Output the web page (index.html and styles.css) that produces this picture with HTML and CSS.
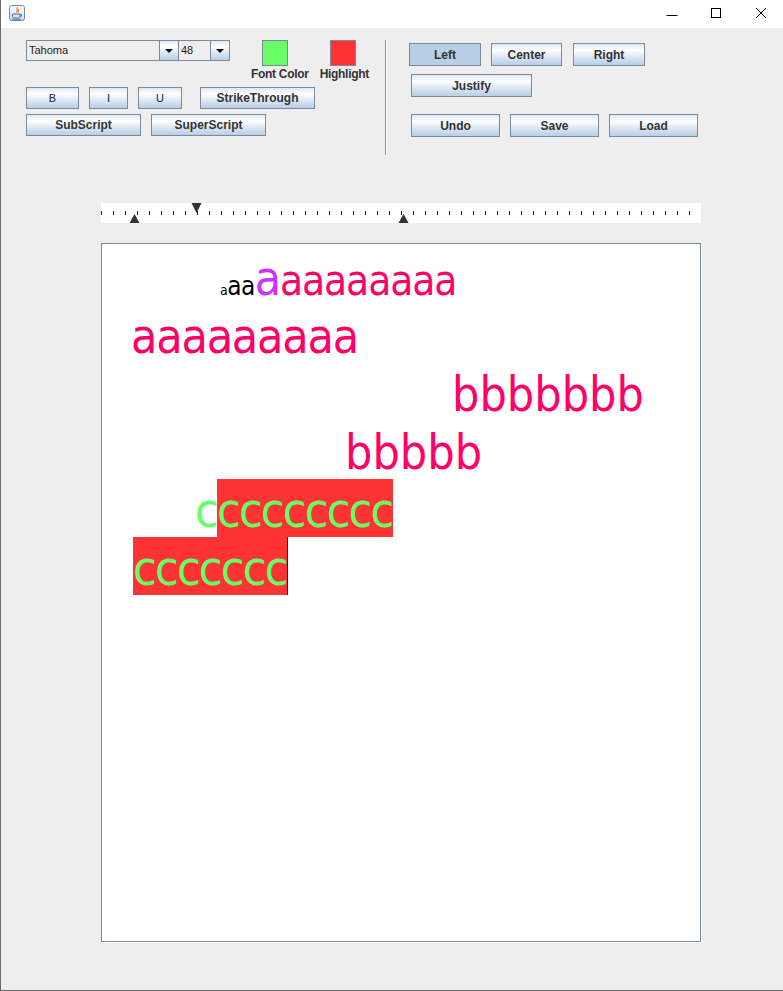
FILE: index.html
```html
<!DOCTYPE html>
<html>
<head>
<meta charset="utf-8">
<link rel="stylesheet" href="styles.css">
</head>
<body>
<div class="window">
  <div class="titlebar">
    <svg class="app-icon" width="16" height="16" viewBox="0 0 16 16">
      <defs>
        <linearGradient id="ig" x1="0" y1="0" x2="0" y2="1">
          <stop offset="0" stop-color="#ffffff"/>
          <stop offset="1" stop-color="#c9d9ea"/>
        </linearGradient>
      </defs>
      <rect x="0.5" y="0.5" width="15" height="15" rx="2" fill="url(#ig)" stroke="#6d8db5"/>
      <path d="M8.6 2.2 C6.6 3.8 9.6 5.2 7.4 7.6 M9.8 4.2 C8.8 5.2 10.2 6 9 7.4" fill="none" stroke="#e8762c" stroke-width="1.1"/>
      <path d="M3.5 9 H11 V11 C11 12.3 10 13 9 13 H5.5 C4.4 13 3.5 12.3 3.5 11 Z" fill="none" stroke="#4c72a8" stroke-width="1"/>
      <path d="M11 9.6 H12.4 V11.2 H11" fill="none" stroke="#4c72a8" stroke-width="1"/>
      <path d="M3 14.3 H12" stroke="#4c72a8" stroke-width="0.9"/>
    </svg>
    <div class="win-controls">
      <div class="wc wc-min"><svg width="12" height="12" viewBox="0 0 12 12"><path d="M0.5 6.5 H11.5" stroke="#000" stroke-width="1"/></svg></div>
      <div class="wc wc-max"><svg width="12" height="12" viewBox="0 0 12 12"><rect x="1.5" y="1.5" width="9" height="9" fill="none" stroke="#000" stroke-width="1"/></svg></div>
      <div class="wc wc-close"><svg width="12" height="12" viewBox="0 0 12 12"><path d="M1 1 L11 11 M11 1 L1 11" stroke="#000" stroke-width="1"/></svg></div>
    </div>
  </div>

  <div class="main">
    <div class="toolbar">
      <div class="left-group">
        <div class="row row1">
          <div class="combo font-combo">
            <div class="combo-field">Tahoma</div>
            <div class="combo-arrow"><span class="tri"></span></div>
          </div>
          <div class="combo size-combo">
            <div class="combo-field">48</div>
            <div class="combo-arrow"><span class="tri"></span></div>
          </div>
          <div class="color-col col-font">
            <div class="swatch swatch-green"></div>
            <div class="color-label">Font Color</div>
          </div>
          <div class="color-col col-hl">
            <div class="swatch swatch-red"></div>
            <div class="color-label">Highlight</div>
          </div>
        </div>
        <div class="row row2">
          <div class="btn plain w-b">B</div>
          <div class="btn plain w-i">I</div>
          <div class="btn plain w-u">U</div>
          <div class="btn w-strike">StrikeThrough</div>
        </div>
        <div class="row row3">
          <div class="btn w-script">SubScript</div>
          <div class="btn w-script">SuperScript</div>
        </div>
      </div>
      <div class="separator"></div>
      <div class="right-group">
        <div class="rrow rrow1">
          <div class="btn tall selected w-left">Left</div>
          <div class="btn tall w-center">Center</div>
          <div class="btn tall w-right">Right</div>
        </div>
        <div class="rrow rrow2">
          <div class="btn tall w-justify">Justify</div>
        </div>
        <div class="rrow rrow3">
          <div class="btn tall w-action">Undo</div>
          <div class="btn tall w-action">Save</div>
          <div class="btn tall w-action">Load</div>
        </div>
      </div>
    </div>

    <div class="ruler">
      <svg width="600" height="20" viewBox="0 0 600 20">
        <defs>
          <pattern id="ticks" x="0" y="0" width="12" height="20" patternUnits="userSpaceOnUse">
            <rect x="0" y="8" width="1" height="4" fill="#222"/>
          </pattern>
        </defs>
        <rect x="0" y="0" width="600" height="20" fill="#ffffff"/>
        <rect x="0" y="0" width="590" height="20" fill="url(#ticks)"/>
        <path d="M90.5 0 H100.5 L95.5 10 Z" fill="#333"/>
        <path d="M28.5 20 H38.5 L33.5 11 Z" fill="#333"/>
        <path d="M297.5 20 H307.5 L302.5 11 Z" fill="#333"/>
      </svg>
    </div>

    <div class="page">
      <div class="doc">
        <div class="line l1"><span class="t14">a</span><span class="t26">aa</span><span class="purple a48">a</span><span class="pink a42">aaaaaaaa</span></div>
        <div class="line l2"><span class="pink a48">aaaaaaaaa</span></div>
        <div class="line l3"><span class="pink">bbbbbbb</span></div>
        <div class="line l4"><span class="pink">bbbbb</span></div>
        <div class="line l5"><span class="green cc">c</span><span class="hl green cc">cccccccc</span></div>
        <div class="line l6"><span class="hl green cc">ccccccc</span><span class="caret"></span></div>
      </div>
    </div>
  </div>
</div>
</body>
</html>
```

FILE: styles.css
```css
* { box-sizing: border-box; }

html, body {
  margin: 0;
  padding: 0;
  background: #eeeeee;
}

.window {
  width: 783px;
  height: 991px;
  border-left: 1px solid #6b6b6b;
  border-bottom: 1px solid #6b6b6b;
  overflow: hidden;
  font-family: "Liberation Sans", Arial, sans-serif;
}

/* ---------- title bar ---------- */
.titlebar {
  height: 29px;
  background: #ffffff;
  display: flex;
  align-items: flex-start;
  border-bottom: 1px solid #f0f0f0;
}

.app-icon {
  margin: 5px 0 0 8px;
  display: block;
}

.win-controls {
  margin-left: auto;
  display: flex;
}

.wc {
  height: 28px;
  display: flex;
  align-items: center;
  justify-content: center;
}

.wc-min { width: 45px; }
.wc-max { width: 45px; }
.wc-close { width: 44px; }

.wc-min svg { margin-top: 1px; }
.wc-max svg { margin-top: -3px; margin-left: -1px; }
.wc-close svg { margin-top: -3px; }

/* ---------- main area ---------- */
.main {
  height: 961px;
  background: #eeeeee;
}

.toolbar {
  display: flex;
  align-items: flex-start;
  padding: 11px 0 0 25px;
  height: 126px;
}

.left-group {
  width: 342px;
  flex-shrink: 0;
}

.row {
  display: flex;
  align-items: flex-start;
}

.row > *, .rrow > * { flex-shrink: 0; }

.row1 { height: 47px; }
.row2 { gap: 10px; }
.row3 { gap: 10px; margin-top: 5px; }

.combo {
  display: flex;
  height: 21px;
  border: 1px solid #7a8a99;
  background: #eeeeee;
}

.font-combo { width: 153px; }
.size-combo { width: 52px; margin-left: -1px; }

.combo-field {
  flex: 1;
  border-right: 1px solid #7a8a99;
  font-size: 11px;
  line-height: 19px;
  color: #222;
  padding-left: 2px;
}

.combo-arrow {
  width: 18px;
  flex-shrink: 0;
  background: linear-gradient(to bottom, #dde8f3 0%, #ffffff 30%, #dde8f3 60%, #b8cfe5 100%);
  display: flex;
  align-items: center;
  justify-content: center;
}

.tri {
  width: 0;
  height: 0;
  border-left: 4px solid transparent;
  border-right: 4px solid transparent;
  border-top: 4px solid #111;
  margin-top: 1px;
}

.color-col {
  display: flex;
  flex-direction: column;
  align-items: flex-start;
}

.col-font { margin-left: 21px; }
.col-font .swatch { margin-left: 11px; }
.col-hl { margin-left: 11px; }
.col-hl .swatch { margin-left: 10px; }

.swatch {
  width: 26px;
  height: 26px;
  border: 1px solid #7a8a99;
}

.swatch-green { background: #66ff66; }
.swatch-red { background: #ff3333; }

.color-label {
  font-size: 12px;
  font-weight: bold;
  color: #333333;
  line-height: 14px;
  margin-top: 1px;
  white-space: nowrap;
  letter-spacing: -0.3px;
}

/* ---------- buttons ---------- */
.btn {
  height: 22px;
  border: 1px solid #7a8a99;
  background: linear-gradient(to bottom, #dde8f3 0%, #ffffff 30%, #dde8f3 60%, #b8cfe5 100%);
  display: flex;
  align-items: center;
  justify-content: center;
  font-size: 12px;
  font-weight: bold;
  color: #333333;
  white-space: nowrap;
}

.btn.plain {
  font-weight: normal;
  font-size: 11px;
  color: #222;
}

.btn.tall { height: 23px; }

.btn.selected {
  background: #b8cfe5;
}

.w-b { width: 53px; }
.w-i { width: 39px; }
.w-u { width: 44px; }
.w-strike { width: 115px; margin-left: 8px; }
.w-script { width: 115px; }

.separator {
  width: 2px;
  height: 115px;
  margin-left: 17px;
  flex-shrink: 0;
  border-left: 1px solid #8294b6;
  border-right: 1px solid #ffffff;
}

.right-group {
  margin-left: 22px;
  padding-top: 3px;
}

.rrow { display: flex; }
.rrow1 { gap: 10px; }
.rrow1 .w-right { margin-left: 1px; }
.rrow2 { margin-top: 8px; margin-left: 2px; }
.rrow3 { margin-top: 17px; margin-left: 2px; gap: 10px; }

.w-left { width: 72px; }
.w-center { width: 71px; }
.w-right { width: 72px; }
.w-justify { width: 121px; }
.w-action { width: 89px; }

/* ---------- ruler ---------- */
.ruler {
  margin: 48px 0 0 100px;
  width: 600px;
  height: 20px;
}

.ruler svg { display: block; }

/* ---------- page ---------- */
.page {
  margin: 20px 0 0 100px;
  width: 600px;
  height: 699px;
  background: #ffffff;
  border: 1px solid #7a8a99;
  box-shadow: 1px 1px 0 #ffffff;
}

.doc {
  padding-top: 3px;
  font-family: "DejaVu Sans Condensed", "DejaVu Sans", sans-serif;
  font-stretch: condensed;
  font-size: 48px;
}

.line {
  height: 58px;
  line-height: 62px;
  white-space: nowrap;
}

.l1 { padding-left: 118px; }
.l2 { padding-left: 29px; }
.l3 { padding-left: 350px; }
.l4 { padding-left: 243px; }
.l5 { padding-left: 93px; }
.l6 { padding-left: 31px; }

.t14 { font-size: 14px; letter-spacing: -0.026em; color: #000; }
.t26 { font-size: 26px; letter-spacing: -0.026em; color: #000; }
.a48 { font-size: 48px; letter-spacing: -0.026em; }
.a42 { font-size: 42px; letter-spacing: -0.026em; }

.pink { color: #ff0066; }
.purple { color: #cc33ff; }
.green { color: #66ff66; }

.cc { letter-spacing: -1.8px; }

.hl {
  display: inline-block;
  height: 58px;
  vertical-align: top;
  background: #ff3333;
}

.caret {
  display: inline-block;
  width: 1px;
  height: 58px;
  vertical-align: top;
  background: #222222;
}
```
